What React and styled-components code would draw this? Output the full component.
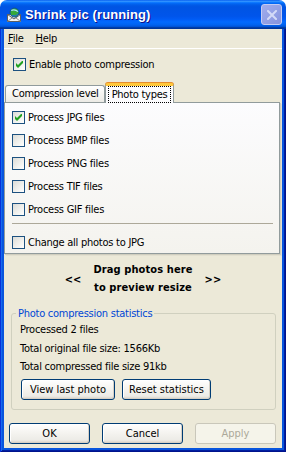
import React from 'react';
import styled, { createGlobalStyle } from 'styled-components';

const Global = createGlobalStyle`
  html, body { margin: 0; padding: 0; background: #ffffff; }
  body {
    font-family: "DejaVu Sans Condensed", "DejaVu Sans", sans-serif;
    font-size: 11px;
    letter-spacing: -0.25px;
    color: #000;
  }
  #root { width: 286px; height: 452px; }
`;

const Window = styled.div`
  width: 286px;
  height: 452px;
  display: flex;
  flex-direction: column;
  border-radius: 7px 7px 0 0;
  overflow: hidden;
`;

const TitleBar = styled.div`
  height: 29px;
  flex: none;
  display: flex;
  align-items: center;
  padding: 0 4px 0 6px;
  box-sizing: border-box;
  background: linear-gradient(to bottom, #0058ee 0%, #3593ff 4%, #288eff 6%, #127dff 8%, #036ffc 10%, #0262ee 14%, #0057e5 20%, #0054e3 24%, #0055eb 56%, #005bf5 66%, #026afe 76%, #0062ef 86%, #0052d6 92%, #0040ab 94%, #003092 100%);
`;

const Title = styled.span`
  margin-left: 3px;
  font-family: "Liberation Sans", Arial, sans-serif;
  font-weight: bold;
  font-size: 13px;
  color: #fff;
  text-shadow: 1px 1px 0 #0f1089;
  letter-spacing: 0.1px;
`;

const CloseButton = styled.div`
  margin-left: auto;
  width: 21px;
  height: 21px;
  box-sizing: border-box;
  border: 1px solid #c3cbf2;
  border-radius: 3px;
  background: linear-gradient(135deg, #a0acec 0%, #909ee4 60%, #8693dd 100%);
  display: flex;
  align-items: center;
  justify-content: center;
`;

const Frame = styled.div`
  flex: 1;
  display: flex;
  padding: 0 4px 4px 4px;
  background: #0855dd;
  box-shadow: inset 1px 0 #0831d9, inset -1px -1px #00138c, inset 2px 0 #166aee, inset -2px -2px #001ea0, inset 3px 0 #0855dd;
`;

const Body = styled.div`
  flex: 1;
  background: #ece9d8;
  display: flex;
  flex-direction: column;
`;

const MenuBar = styled.div`
  height: 19px;
  flex: none;
  display: flex;
  align-items: center;
  gap: 12px;
  padding-left: 4px;
  border-bottom: 1px solid #ffffff;
`;

const MenuItem = styled.span`
  line-height: 19px;
  u { text-decoration: underline; text-underline-offset: 1px; }
`;

const Content = styled.div`
  display: flex;
  flex-direction: column;
  padding-top: 9px;
`;

const CheckRow = styled.label`
  display: flex;
  align-items: center;
  height: 13px;
  gap: 3px;
  padding-left: ${p => p.$indent || 0}px;
  white-space: nowrap;
`;

const Box = styled.span`
  box-sizing: border-box;
  width: 13px;
  height: 13px;
  flex: none;
  border: 1px solid #1c5180;
  background: linear-gradient(135deg, #dcdcd7 0%, #f2f2ef 60%, #ffffff 100%);
  display: flex;
  align-items: center;
  justify-content: center;
`;

const Check = () => (
  <svg width="7" height="7" viewBox="0 0 7 7">
    <path d="M0 2 L2 4 L7 -1 L7 2 L2 7 L0 5 Z" fill="#21a121" />
  </svg>
);

const Checkbox = ({ checked, label, indent }) => (
  <CheckRow $indent={indent}>
    <Box>{checked && <Check />}</Box>
    <span>{label}</span>
  </CheckRow>
);

const TabArea = styled.div`
  margin: 11px 2px 0 0;
  display: flex;
  flex-direction: column;
`;

const TabStrip = styled.div`
  display: flex;
  align-items: flex-end;
  padding-left: 1px;
  margin-bottom: -1px;
  position: relative;
  z-index: 1;
`;

const Tab = styled.div`
  box-sizing: border-box;
  border: 1px solid #919b9c;
  border-bottom: none;
  border-radius: 3px 3px 0 0;
  white-space: nowrap;
  display: flex;
  align-items: center;
  ${p => p.$active ? `
    height: 20px;
    padding: 0 2px;
    border-top: 3px solid #ffc83c;
    box-shadow: 0 -1px 0 #e68b2c;
    background: #fcfcfe;
    margin-top: 1px;
  ` : `
    height: 17px;
    margin-bottom: 1px;
    padding: 0 5px 1px 6px;
    background: linear-gradient(to bottom, #ffffff 0%, #f6f5f1 50%, #ecebe6 100%);
  `}
`;

const Focus = styled.span`
  border: 1px dotted #000;
  padding: 1px 2px 0 3px;
  line-height: 14px;
`;

const Panel = styled.div`
  border: 1px solid #919b9c;
  background: linear-gradient(to bottom, #fcfcfe 0%, #f4f3ee 100%);
  box-shadow: 1px 1px 0 #d0cebf, 2px 2px 0 #e3e0d0;
  display: flex;
  flex-direction: column;
  gap: 10px;
  padding: 8px 6px 4px 7px;
`;

const Separator = styled.div`
  height: 1px;
  background: #aca899;
  margin: -3px 0 2px 0;
`;

const DragArea = styled.div`
  margin-top: 7px;
  display: flex;
  justify-content: center;
  align-items: center;
  gap: 12px;
  font-weight: bold;
  letter-spacing: 0.1px;
`;

const DragText = styled.div`
  text-align: center;
  line-height: 18px;
`;

const Group = styled.fieldset`
  margin: 10px 6px 0 7px;
  padding: 1px 8px 9px 8px;
  border: 1px solid #d0d0bf;
  border-radius: 3px;
  display: flex;
  flex-direction: column;
`;

const Legend = styled.legend`
  color: #0046d5;
  padding: 0 2px;
  margin-left: -4px;
  line-height: 13px;
`;

const StatLine = styled.div`
  line-height: 18.5px;
`;

const ButtonRow = styled.div`
  display: flex;
  gap: ${p => p.$gap}px;
  padding-left: ${p => p.$indent}px;
  margin-top: ${p => p.$top}px;
`;

const Button = styled.button`
  box-sizing: border-box;
  height: 21px;
  width: ${p => p.$w}px;
  padding: 0;
  font: inherit;
  color: #000;
  border: 1px solid #003c74;
  border-radius: 3px;
  background: linear-gradient(to bottom, #ffffff 0%, #f5f4f0 45%, #ecebe6 85%, #d6d0c5 100%);
  box-shadow: inset -1px -1px 0 #d6d0c5, inset 1px 1px 0 #ffffff;
  &:disabled {
    border-color: #c9c7ba;
    background: #f5f4ea;
    color: #aca899;
    box-shadow: none;
  }
`;

const AppIcon = () => (
  <svg width="16" height="16" viewBox="0 0 16 16">
    <path d="M1.5 7.5 h13 v7 h-13 z" fill="#f4f4f4" stroke="#5f5f5f" />
    <path d="M1.5 14.5 L6.5 10.5 M14.5 14.5 L9.5 10.5" stroke="#8a8a8a" fill="none" />
    <path d="M1.5 7.5 L8 12 L14.5 7.5" stroke="#5f5f5f" fill="none" />
    <circle cx="8.5" cy="5.5" r="4.5" fill="#34a83a" stroke="#0b4f9e" />
    <path d="M5.2 3.6 Q8.5 1.6 12 4.6" stroke="#a6e1ff" strokeWidth="1.2" fill="none" />
    <path d="M6 8.4 Q9 9.8 12 7" stroke="#1f6fc9" fill="none" />
  </svg>
);

const CloseX = () => (
  <svg width="10" height="10" viewBox="0 0 10 10">
    <path d="M1 1 L9 9 M9 1 L1 9" stroke="#d3daf7" strokeWidth="2" strokeLinecap="square" />
  </svg>
);

export default function App() {
  return (
    <>
      <Global />
      <Window>
        <TitleBar>
          <AppIcon />
          <Title>Shrink pic (running)</Title>
          <CloseButton><CloseX /></CloseButton>
        </TitleBar>
        <Frame>
          <Body>
            <MenuBar>
              <MenuItem><u>F</u>ile</MenuItem>
              <MenuItem><u>H</u>elp</MenuItem>
            </MenuBar>
            <Content>
              <Checkbox checked label="Enable photo compression" indent={9} />
              <TabArea>
                <TabStrip>
                  <Tab>Compression level</Tab>
                  <Tab $active><Focus>Photo types</Focus></Tab>
                </TabStrip>
                <Panel>
                  <Checkbox checked label="Process JPG files" />
                  <Checkbox label="Process BMP files" />
                  <Checkbox label="Process PNG files" />
                  <Checkbox label="Process TIF files" />
                  <Checkbox label="Process GIF files" />
                  <Separator />
                  <Checkbox label="Change all photos to JPG" />
                </Panel>
              </TabArea>
              <DragArea>
                <span>&lt;&lt;</span>
                <DragText>Drag photos here<br />to preview resize</DragText>
                <span>&gt;&gt;</span>
              </DragArea>
              <Group>
                <Legend>Photo compression statistics</Legend>
                <StatLine>Processed 2 files</StatLine>
                <StatLine>Total original file size: 1566Kb</StatLine>
                <StatLine>Total compressed file size 91kb</StatLine>
                <ButtonRow $gap={7} $indent={1} $top={2}>
                  <Button $w={94}>View last photo</Button>
                  <Button $w={89}>Reset statistics</Button>
                </ButtonRow>
              </Group>
              <ButtonRow $gap={12} $indent={5} $top={13}>
                <Button $w={81}>OK</Button>
                <Button $w={81}>Cancel</Button>
                <Button $w={81} disabled>Apply</Button>
              </ButtonRow>
            </Content>
          </Body>
        </Frame>
      </Window>
    </>
  );
}
